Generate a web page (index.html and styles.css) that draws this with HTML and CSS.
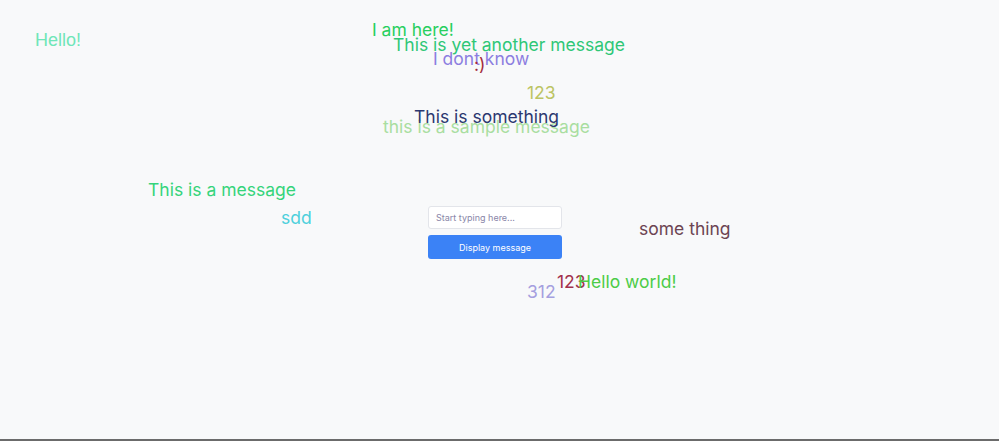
FILE: index.html
```html
<!DOCTYPE html>
<html lang="en">
<head>
<meta charset="utf-8">
<title>Messages</title>
<link rel="stylesheet" href="styles.css">
</head>
<body>
<main class="stage">
  <div class="messages">
    <span class="msg hello" style="left:35px;top:29px">Hello!</span>
    <span class="msg am" style="left:372px;top:19px">I am here!</span>
    <span class="msg yet" style="left:393px;top:34px">This is yet another message</span>
    <span class="msg dont" style="left:433px;top:48px">I dont know</span>
    <span class="msg smile" style="left:474px;top:54px">:)</span>
    <span class="msg n123a" style="left:527px;top:82px">123</span>
    <span class="msg sample" style="left:383px;top:116px">this is a sample message</span>
    <span class="msg something" style="left:414px;top:106px">This is something</span>
    <span class="msg amsg" style="left:148px;top:179px">This is a message</span>
    <span class="msg sdd" style="left:281px;top:207px">sdd</span>
    <span class="msg some" style="left:639px;top:218px">some thing</span>
    <span class="msg n312" style="left:527px;top:281px">312</span>
    <span class="msg n123b" style="left:557px;top:271px">123</span>
    <span class="msg world" style="left:578px;top:271px">Hello world!</span>
  </div>
  <form class="composer" onsubmit="return false">
    <input class="composer-input" type="text" placeholder="Start typing here...">
    <button class="composer-btn" type="submit">Display message</button>
  </form>
</main>
<div class="bottom-line"></div>
</body>
</html>
```
FILE: styles.css
```css
html, body {
  margin: 0;
  padding: 0;
  height: 100%;
}
body {
  background: #f8f9fa;
  font-family: Inter, "Noto Sans", sans-serif;
  display: flex;
  flex-direction: column;
  overflow: hidden;
}
.stage {
  position: relative;
  flex: 1;
  display: flex;
  flex-direction: column;
  align-items: center;
  padding-top: 206px;
  padding-right: 9px;
}
.messages {
  position: absolute;
  inset: 0;
}
.msg {
  position: absolute;
  white-space: nowrap;
  font-size: 17.5px;
  line-height: 22px;
}
.hello { color: #6fe6b8; font-family: "Liberation Sans", Arial, sans-serif; font-size: 18px; }
.am { color: #27cf5e; }
.yet { color: #2fc777; }
.dont { color: #8c7ee0; }
.smile { color: #a32c3c; }
.n123a { color: #bcc463; }
.sample { color: #a9dea0; }
.something { color: #2c3870; }
.amsg { color: #35d47a; }
.sdd { color: #4dd0dc; }
.some { color: #6c4452; }
.n312 { color: #a59fdf; }
.n123b { color: #a2304c; }
.world { color: #4ccc47; }

.composer {
  position: relative;
  width: 134px;
  display: flex;
  flex-direction: column;
  gap: 6px;
  margin: 0;
}
.composer-input {
  box-sizing: border-box;
  height: 23px;
  width: 100%;
  border: 1px solid #e3e5ea;
  border-radius: 3px;
  background: #fff;
  padding: 0 7px;
  font-family: Inter, sans-serif;
  font-size: 9px;
  color: #333;
  outline: none;
}
.composer-input::placeholder {
  color: #8a86a8;
}
.composer-btn {
  height: 24px;
  width: 100%;
  border: none;
  border-radius: 3px;
  background: #3b82f6;
  color: #fff;
  font-family: Inter, sans-serif;
  font-size: 9px;
  padding: 0;
}
.bottom-line {
  height: 2px;
  background: #6b6b6b;
  flex: none;
}
```
